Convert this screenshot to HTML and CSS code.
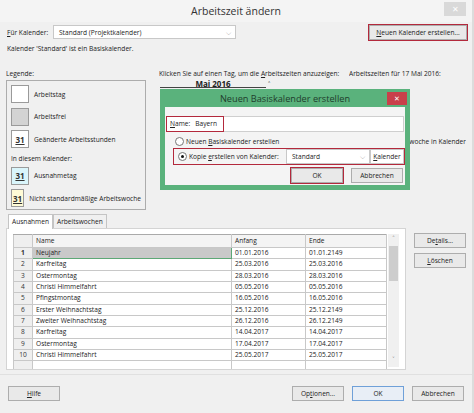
FILE: index.html
```html
<!DOCTYPE html>
<html lang="de">
<head>
    <meta charset="UTF-8">
    <title>Arbeitszeit ändern</title>
    <link rel="stylesheet" href="styles.css">
</head>
<body>
    <div class="window">
        <div class="titlebar">
            <span class="title">Arbeitszeit ändern</span>
            <span class="win-close">&#x2715;</span>
        </div>

        <div class="content">
            <div class="top-row">
                <span class="lbl"><u>F</u>ür Kalender:</span>
                <div class="select cal-select">Standard (Projektkalender)<span class="chev">&#x2335;</span></div>
                <div class="spacer"></div>
                <button class="btn btn-new marked"><u>N</u>euen Kalender erstellen...</button>
            </div>
            <div class="info">Kalender 'Standard' ist ein Basiskalender.</div>

            <div class="middle">
                <div class="legend-col">
                    <div class="caption">Legende:</div>
                    <div class="legend">
                        <div class="leg-item"><span class="swatch"></span><span>Arbeitstag</span></div>
                        <div class="leg-item"><span class="swatch free"></span><span>Arbeitsfrei</span></div>
                        <div class="leg-item"><span class="swatch"><b>31</b></span><span>Geänderte Arbeitsstunden</span></div>
                        <div class="leg-sub">In diesem Kalender:</div>
                        <div class="leg-item"><span class="swatch exc"><b>31</b></span><span>Ausnahmetag</span></div>
                        <div class="leg-item"><span class="swatch week"><b>31</b></span><span>Nicht standardmäßige Arbeitswoche</span></div>
                    </div>
                </div>

                <div class="cal-col">
                    <div class="caption">Klicken Sie auf einen Tag, um die <u>A</u>rbeitszeiten anzuzeigen:</div>
                    <div class="cal">
                        <div class="cal-main">
                            <div class="month">Mai 2016</div>
                            <div class="days" id="days"></div>
                        </div>
                        <div class="cal-nav">
                            <span>&#x2c4;</span>
                            <span>&#x2c5;</span>
                        </div>
                    </div>
                </div>

                <div class="times-col">
                    <div class="caption">Arbeitszeiten für 17 Mai 2016:</div>
                    <div class="based">Standardarbeitswoche in Kalender</div>
                </div>
            </div>

            <div class="tabs">
                <span class="tab active">Ausnahmen</span>
                <span class="tab">Arbeitswochen</span>
            </div>
            <div class="tabpanel">
                <div class="grid">
                    <table class="exc-table">
                        <thead>
                            <tr><th class="num"></th><th class="c-name">Name</th><th class="c-date">Anfang</th><th class="c-end">Ende</th></tr>
                        </thead>
                        <tbody id="rows"></tbody>
                    </table>
                    <div class="scrollbar">
                        <span class="arrow">&#x2c4;</span>
                        <span class="thumb"></span>
                        <span class="track"></span>
                        <span class="arrow">&#x2c5;</span>
                    </div>
                </div>
                <div class="side-btns">
                    <button class="btn">De<u>t</u>ails...</button>
                    <button class="btn"><u>L</u>öschen</button>
                </div>
            </div>
        </div>

        <div class="footer">
            <button class="btn"><u>H</u>ilfe</button>
            <div class="spacer"></div>
            <button class="btn">Op<u>t</u>ionen...</button>
            <button class="btn default">OK</button>
            <button class="btn">Abbrechen</button>
        </div>

        <div class="modal">
            <div class="modal-title">
                <span>Neuen Basiskalender erstellen</span>
                <span class="modal-close">&#x2715;</span>
            </div>
            <div class="modal-body">
                <div class="name-row">
                    <span class="name-lbl marked"><u>N</u>ame:&nbsp;&nbsp; Bayern</span>
                    <span class="name-input"></span>
                </div>
                <div class="radio-row">
                    <span class="radio"></span>
                    <span>Neuen <u>B</u>asiskalender erstellen</span>
                </div>
                <div class="radio-row copy-row marked">
                    <span class="radio on"></span>
                    <span>Kopie <u>e</u>rstellen von Kalender:</span>
                    <div class="select small-select">Standard<span class="chev">&#x2335;</span></div>
                    <span class="cal-btn"><u>K</u>alender</span>
                </div>
                <div class="modal-btns">
                    <button class="btn marked">OK</button>
                    <button class="btn">Abbrechen</button>
                </div>
            </div>
        </div>
    </div>

    <script>
        const days = document.getElementById('days');
        for (let i = 0; i < 42; i++) {
            const cell = document.createElement('span');
            cell.className = 'day';
            if (i === 35) cell.textContent = '30';
            if (i === 36) cell.textContent = '31';
            days.appendChild(cell);
        }

        const exceptions = [
            ['Neujahr', '01.01.2016', '01.01.2149'],
            ['Karfreitag', '25.03.2016', '25.03.2016'],
            ['Ostermontag', '28.03.2016', '28.03.2016'],
            ['Christi Himmelfahrt', '05.05.2016', '05.05.2016'],
            ['Pfingstmontag', '16.05.2016', '16.05.2016'],
            ['Erster Weihnachtstag', '25.12.2016', '25.12.2149'],
            ['Zweiter Weihnachtstag', '26.12.2016', '26.12.2149'],
            ['Karfreitag', '14.04.2017', '14.04.2017'],
            ['Ostermontag', '17.04.2017', '17.04.2017'],
            ['Christi Himmelfahrt', '25.05.2017', '25.05.2017'],
            ['', '', '']
        ];
        const rows = document.getElementById('rows');
        exceptions.forEach(function (e, i) {
            const tr = document.createElement('tr');
            if (i === 0) tr.className = 'selected';
            const num = document.createElement('td');
            num.className = 'num';
            num.textContent = i < 10 ? i + 1 : '';
            tr.appendChild(num);
            e.forEach(function (v, j) {
                const td = document.createElement('td');
                td.textContent = v;
                if (i === 0 && j === 0) td.className = 'current';
                tr.appendChild(td);
            });
            rows.appendChild(tr);
        });
    </script>
</body>
</html>
```

FILE: styles.css
```css
* {
    box-sizing: border-box;
}
body {
    margin: 0;
    font-family: 'Open Sans', 'Noto Sans', sans-serif;
    font-size: 6.6px;
    color: #222;
    background: #f0f0f0;
}
.window {
    position: relative;
    width: 474px;
    height: 413px;
    overflow: hidden;
    background: #f0f0f0;
    border-right: 2px solid #dcdcdc;
}
.titlebar {
    height: 22px;
    display: flex;
    align-items: center;
    justify-content: center;
    background: #f4f4f4;
    position: relative;
}
.title {
    font-size: 10.5px;
    color: #333;
}
.win-close {
    position: absolute;
    right: 6px;
    top: 2px;
    width: 22px;
    height: 14px;
    background: #d9d9d9;
    color: #fff;
    font-size: 8px;
    text-align: center;
    line-height: 14px;
}
.content {
    padding: 2px 6px 0 6px;
}
.top-row {
    display: flex;
    align-items: center;
    height: 16px;
}
.lbl {
    margin-left: 1px;
    width: 46px;
}
.select {
    position: relative;
    height: 14px;
    line-height: 13px;
    background: #fff;
    border: 1px solid #c8c8c8;
    padding-left: 5px;
    white-space: nowrap;
}
.chev {
    position: absolute;
    right: 4px;
    top: 0;
    font-size: 7px;
    color: #555;
}
.cal-select {
    width: 183px;
}
.spacer {
    flex: 1;
}
.btn {
    font: inherit;
    color: #222;
    background: #e9e9e9;
    border: 1px solid #adadad;
    height: 15px;
    width: 52px;
    padding: 0;
    white-space: nowrap;
}
.btn-new {
    width: 98px;
    margin-right: -1px;
}
.marked {
    outline: 1.5px solid #b3293c;
}
.info {
    margin: 4px 0 0 1px;
    height: 12px;
}
.middle {
    display: flex;
    margin-top: 13px;
    height: 142px;
}
.caption {
    height: 9px;
    line-height: 9px;
    white-space: nowrap;
}
.legend-col {
    width: 153px;
}
.legend {
    margin-top: 2px;
    width: 140px;
    height: 130px;
    border: 1px solid #acacac;
    padding: 2px 4px;
    white-space: nowrap;
}
.leg-item {
    display: flex;
    align-items: center;
    height: 22.5px;
}
.leg-sub {
    height: 14px;
    line-height: 16px;
}
.swatch {
    width: 18px;
    height: 18px;
    border: 1px solid #9a9a9a;
    background: #fff;
    margin-right: 5px;
    display: flex;
    align-items: center;
    justify-content: center;
    font-size: 8px;
}
.swatch b {
    text-decoration: underline;
    color: #333;
}
.swatch.free {
    background: #d3d3d3;
}
.swatch.exc {
    background: #d9f5fb;
}
.swatch.week {
    background: #fffbd6;
}
.cal-col {
    width: 190px;
}
.cal {
    display: flex;
    margin-top: 1px;
}
.cal-main {
    width: 106px;
    margin-left: 1px;
}
.month {
    font-weight: bold;
    font-size: 8px;
    text-align: center;
    height: 9px;
    line-height: 9px;
    border-bottom: 1px solid #444;
}
.days {
    display: grid;
    grid-template-columns: repeat(7, 15px);
    grid-auto-rows: 15.2px;
    border-left: 1px solid #444;
    margin-top: 4px;
}
.day {
    border-right: 1px solid #444;
    border-bottom: 1px solid #444;
    background: #fff;
    padding-left: 2px;
    line-height: 10px;
}
.cal-nav {
    display: flex;
    flex-direction: column;
    justify-content: space-between;
    width: 14px;
    margin-left: 2px;
    height: 118px;
    font-size: 8px;
    color: #444;
}
.times-col {
    flex: 1;
    overflow: hidden;
}
.based {
    margin-top: 59px;
    white-space: nowrap;
    text-align: right;
    width: 117px;
    direction: rtl;
    overflow: hidden;
}
.tabs {
    display: flex;
    height: 14px;
    margin-top: 3px;
    margin-left: 2px;
}
.tab {
    padding: 0 3px;
    height: 14px;
    line-height: 14px;
    border: 1px solid #c4c4c4;
    border-bottom: none;
    background: #f0f0f0;
}
.tab.active {
    background: #fff;
    height: 15px;
    position: relative;
    z-index: 1;
}
.tabpanel {
    display: flex;
    height: 142px;
}
.grid {
    display: flex;
    width: 400px;
    background: #fff;
    border: 1px solid #d4d4d4;
    padding: 5px 6px 2px 6px;
    overflow: hidden;
}
.exc-table {
    border-collapse: collapse;
    width: 376px;
    table-layout: fixed;
}
.exc-table th,
.exc-table td {
    border: 1px solid #c8c8c8;
    height: 11.33px;
    padding: 0 3px;
    text-align: left;
    font-weight: normal;
    white-space: nowrap;
    overflow: hidden;
    line-height: 10px;
}
.exc-table th {
    height: 13px;
    background: #f4f4f4;
    border-top-color: #aaa;
}
.exc-table .num {
    width: 19px;
    text-align: center;
    background: #efefef;
    color: #333;
}
.c-name {
    width: 199px;
}
.c-date {
    width: 74px;
}
.exc-table td.current {
    background: #c9c9c9;
    border: 1px solid #5da876;
}
.exc-table .selected .num {
    font-weight: bold;
}
.scrollbar {
    width: 11px;
    display: flex;
    flex-direction: column;
    background: #f0f0f0;
    margin-left: 1px;
}
.arrow {
    height: 12px;
    text-align: center;
    font-size: 7px;
    color: #555;
}
.thumb {
    height: 35px;
    background: #cdcdcd;
    margin: 0 1px;
}
.track {
    flex: 1;
}
.side-btns {
    display: flex;
    flex-direction: column;
    gap: 5px;
    padding: 5px 0 0 8px;
}
.footer {
    display: flex;
    align-items: center;
    gap: 8px;
    margin-top: 4px;
    border-top: 1px solid #e0e0e0;
    height: 38px;
    padding: 0 8px;
    background: #f0f0f0;
}
.footer .btn.default {
    border-color: #6fa0d8;
    background: #e8eef6;
}
.modal {
    position: absolute;
    left: 160px;
    top: 89px;
    width: 250px;
    height: 101px;
    background: #5ab27c;
    padding: 0 5px 5px 5px;
}
.modal-title {
    height: 18px;
    display: flex;
    align-items: center;
    justify-content: center;
    font-size: 9.2px;
    color: #1f3d2c;
    position: relative;
}
.modal-close {
    position: absolute;
    right: -2px;
    top: 3px;
    width: 20px;
    height: 13px;
    background: #c9404a;
    color: #fff;
    font-size: 7px;
    text-align: center;
    line-height: 13px;
}
.modal-body {
    background: #f4f4f4;
    height: 78px;
    padding: 9px 1px 0 1px;
    white-space: nowrap;
}
.name-row {
    display: flex;
    height: 16px;
    background: #fff;
    border: 1px solid #cfcfcf;
}
.name-lbl {
    width: 56px;
    padding-left: 3px;
    line-height: 14px;
}
.radio-row {
    display: flex;
    align-items: center;
    height: 12px;
    margin-left: 9px;
    margin-top: 3px;
}
.radio {
    width: 9px;
    height: 9px;
    border: 1px solid #777;
    border-radius: 50%;
    background: #fff;
    margin-right: 2px;
    position: relative;
}
.radio.on::after {
    content: '';
    position: absolute;
    left: 2px;
    top: 2px;
    width: 3px;
    height: 3px;
    border-radius: 50%;
    background: #111;
}
.copy-row {
    margin-left: 8px;
    margin-top: 2px;
    height: 15px;
    padding-left: 4px;
}
.small-select {
    margin-left: auto;
    width: 84px;
    height: 15px;
}
.cal-btn {
    width: 34px;
    height: 15px;
    line-height: 14px;
    text-align: center;
    border: 1px solid #c8c8c8;
    background: #fff;
}
.modal-btns {
    display: flex;
    justify-content: flex-end;
    gap: 8px;
    margin-top: 4px;
    padding-right: 1px;
}
```
